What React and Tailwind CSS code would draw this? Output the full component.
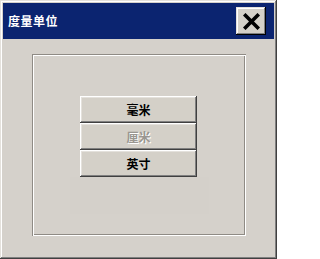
const FONT = { fontFamily: '"SimSun", "Noto Sans CJK SC", "Liberation Sans", sans-serif' };

function UnitButton({ label, disabled }) {
  return (
    <div className="flex h-[27px] w-[117px] items-center justify-center bg-[#d4d0c8] shadow-[inset_-1px_-1px_#404040,inset_1px_1px_#ffffff,inset_-2px_-2px_#808080,inset_2px_2px_#e4e1dc]">
      <span
        className={
          disabled
            ? "text-[12px] font-bold text-[#9a9690] [text-shadow:1px_1px_0_#ffffff]"
            : "text-[12px] font-bold text-black"
        }
      >
        {label}
      </span>
    </div>
  );
}

export default function App() {
  return (
    <div
      style={FONT}
      className="flex h-[259px] w-[277px] flex-col bg-[#d5d1cb] p-[3px] shadow-[inset_-1px_-1px_#404040,inset_1px_1px_#e4e1dc,inset_-2px_-2px_#808080,inset_2px_2px_#ffffff]"
    >
      {/* title bar */}
      <div className="flex h-[36px] items-center justify-between bg-[#0b2470] pl-[5px] pr-[8px]">
        <span className="text-[12px] font-bold tracking-[0.5px] text-white">度量单位</span>
        <div className="flex h-[28px] w-[30px] items-center justify-center bg-[#d4d0c8] shadow-[inset_-1px_-1px_#000000,inset_1px_1px_#e4e1dc,inset_-2px_-2px_#808080,inset_2px_2px_#ffffff]">
          <svg width="17" height="17" viewBox="0 0 17 17">
            <path d="M2.5 2.5 L14.5 14.5 M14.5 2.5 L2.5 14.5" stroke="#000" strokeWidth="3.6" strokeLinecap="square" />
          </svg>
        </div>
      </div>

      {/* body */}
      <div className="pl-[29px] pt-[15px]">
        <div className="h-[182px] w-[214px] pl-[48px] pt-[42px] shadow-[inset_1px_1px_#8f8b85,inset_-1px_-1px_#ffffff,inset_2px_2px_#ffffff,inset_-2px_-2px_#8f8b85]">
          <div className="flex flex-col">
            <UnitButton label="毫米" />
            <UnitButton label="厘米" disabled />
            <UnitButton label="英寸" />
          </div>
          <div className="-ml-[10px] h-[37px] w-[139px] bg-[#d4d0ca]" />
        </div>
      </div>
    </div>
  );
}
